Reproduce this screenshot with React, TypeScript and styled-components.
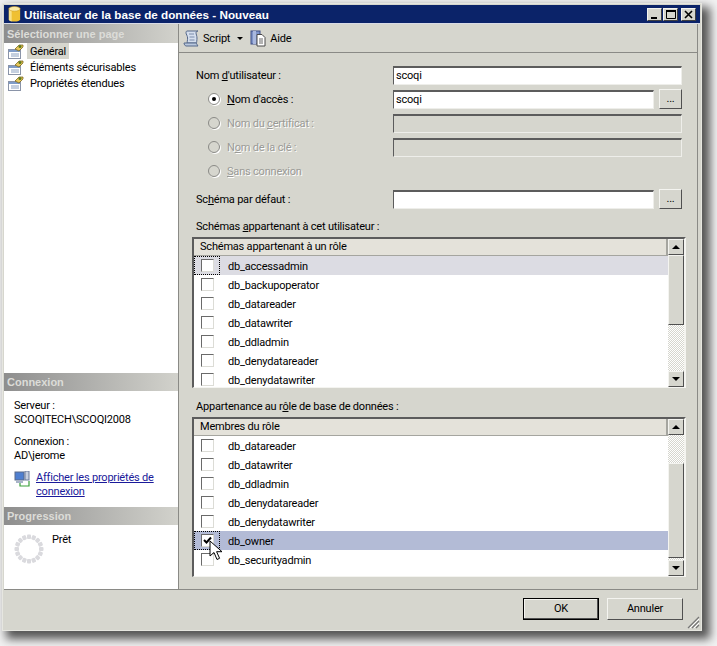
import React from "react";
import styled, { createGlobalStyle } from "styled-components";

const GRAY = "#d6d6ce";
const FONT = `"Roboto", "Liberation Sans", Arial, sans-serif`;
const BOLD = `"Liberation Sans", Arial, sans-serif`;

const Global = createGlobalStyle`
  html, body { margin: 0; padding: 0; background: #f2f2f2; }
  body { width: 717px; height: 646px; overflow: hidden; font: 11px ${FONT}; letter-spacing: -0.2px; color: #000; }
  u { text-underline-offset: 1px; }
`;

const Page = styled.div`
  width: 717px;
  height: 646px;
  padding: 3px 0 0 2px;
  box-sizing: border-box;
`;
const Win = styled.div`
  width: 700px;
  height: 628px;
  box-sizing: border-box;
  background: ${GRAY};
  border: 1px solid #e6e6e0;
  padding: 1px 1px 0 1px;
  box-shadow: 6px 6px 9px 2px #555;
  display: flex;
  flex-direction: column;
  position: relative;
`;
const TitleBar = styled.div`
  height: 19px;
  box-sizing: border-box;
  background: #0b2369;
  border-bottom: 1px solid #d8dbe6;
  display: flex;
  align-items: center;
  padding: 0 4px 0 3px;
  gap: 2px;
  flex: none;
`;
const TitleText = styled.div`
  flex: 1;
  color: #fff;
  font: bold 11.7px ${BOLD};
  letter-spacing: 0;
  white-space: nowrap;
`;
const CapButton = styled.div<{ $gap?: number }>`
  width: 15px;
  height: 13px;
  background: ${GRAY};
  border: 1px solid;
  border-color: #f4f4f0 #404040 #404040 #f4f4f0;
  box-sizing: border-box;
  margin-left: ${(p) => p.$gap ?? 0}px;
  display: flex;
  align-items: center;
  justify-content: center;
`;
const Body = styled.div`
  flex: none;
  display: flex;
  height: 566px;
  box-sizing: border-box;
  margin-right: 2px;
  border-bottom: 1px solid #8a8a86;
`;
const Side = styled.div`
  width: 175px;
  box-sizing: border-box;
  flex: none;
  background: #fff;
  border-right: 1px solid #8a8a86;
  display: flex;
  flex-direction: column;
`;
const SideHead = styled.div<{ $h: number }>`
  height: ${(p) => p.$h}px;
  flex: none;
  background: linear-gradient(90deg, #8e8e8e, #d2d2cc);
  color: #dcdcd8;
  font: bold 11px ${BOLD};
  letter-spacing: 0;
  display: flex;
  align-items: center;
  padding-left: 3px;
`;
const Nav = styled.div`
  flex: 1;
  display: flex;
  flex-direction: column;
  padding-left: 4px;
`;
const NavItem = styled.div`
  height: 16px;
  display: flex;
  align-items: center;
  gap: 3px;
  white-space: nowrap;
`;
const NavLabel = styled.span<{ $active?: boolean }>`
  padding: 0 3px;
  height: 16px;
  line-height: 18px;
  background: ${(p) => (p.$active ? GRAY : "transparent")};
`;
const ConnBox = styled.div`
  height: 116px;
  box-sizing: border-box;
  flex: none;
  padding: 8px 0 0 10px;
  line-height: 13.5px;
`;
const ConnBlock = styled.div`
  margin-bottom: 9px;
  white-space: nowrap;
`;
const LinkRow = styled.div`
  display: flex;
  gap: 5px;
  margin-top: 1px;
  align-items: flex-start;
`;
const Link = styled.a`
  color: #1a1a9a;
  text-decoration: underline;
  line-height: 13.5px;
  width: 125px;
`;
const ProgBox = styled.div`
  height: 64px;
  box-sizing: border-box;
  flex: none;
  display: flex;
  padding: 8px 0 0 9px;
  gap: 7px;
`;
const Main = styled.div`
  flex: 1;
  display: flex;
  flex-direction: column;
  min-width: 0;
  border-right: 1px solid #8a8a86;
`;
const Toolbar = styled.div`
  height: 29px;
  flex: none;
  border-bottom: 1px solid #8a8a86;
  display: flex;
  align-items: center;
  padding-left: 4px;
  box-sizing: border-box;
`;
const ToolLabel = styled.span`
  margin-left: 3px;
`;
const Caret = styled.span`
  width: 0;
  height: 0;
  border: 3px solid transparent;
  border-top: 3px solid #000;
  border-bottom: 0;
  margin: 1px 7px 0 7px;
`;
const Content = styled.div`
  flex: 1;
  padding: 10px 0 0 13px;
  display: flex;
  flex-direction: column;
`;
const FormRow = styled.div<{ $mt?: number }>`
  height: 24px;
  display: flex;
  align-items: center;
  padding-left: 4px;
  margin-top: ${(p) => p.$mt ?? 0}px;
`;
const Label = styled.div<{ $disabled?: boolean }>`
  white-space: nowrap;
  color: ${(p) => (p.$disabled ? "#9a9a96" : "#000")};
  text-shadow: ${(p) => (p.$disabled ? "1px 1px 0 #fff" : "none")};
`;
const LabelCell = styled.div`
  width: 197px;
  flex: none;
  display: flex;
  align-items: center;
`;
const Radio = styled.span<{ $on?: boolean; $disabled?: boolean }>`
  width: 12px;
  height: 12px;
  border-radius: 50%;
  box-sizing: border-box;
  flex: none;
  margin: 0 7px 0 12px;
  border: 1px solid #8a8a86;
  background: ${(p) => (p.$disabled ? GRAY : "#fff")};
  box-shadow: 1px 1px 0 #fff;
  display: flex;
  align-items: center;
  justify-content: center;
  &::after {
    content: "";
    width: 4px;
    height: 4px;
    border-radius: 50%;
    background: ${(p) => (p.$on ? "#000" : "transparent")};
  }
`;
const Field = styled.div<{ $disabled?: boolean }>`
  flex: 1;
  height: 19px;
  box-sizing: border-box;
  background: ${(p) => (p.$disabled ? GRAY : "#fff")};
  border: 2px solid;
  border-color: #5c5c5c #eeeeea #eeeeea #5c5c5c;
  border-width: 2px 1px 1px 1px;
  padding-left: 2px;
  line-height: 15px;
`;
const FieldWrap = styled.div`
  width: 289px;
  flex: none;
  display: flex;
  gap: 5px;
  align-items: center;
`;
const Browse = styled.div`
  width: 23px;
  height: 20px;
  box-sizing: border-box;
  flex: none;
  background: ${GRAY};
  border: 1px solid;
  border-color: #f4f4f0 #505050 #505050 #f4f4f0;
  text-align: center;
  line-height: 18px;
`;
const SectionLabel = styled.div<{ $mt: number }>`
  margin-top: ${(p) => p.$mt}px;
  height: 17px;
  line-height: 14px;
  padding-left: 4px;
  white-space: nowrap;
`;
const GridBox = styled.div<{ $h: number }>`
  height: ${(p) => p.$h}px;
  width: 494px;
  flex: none;
  box-sizing: border-box;
  border: 1px solid;
  border-width: 2px 2px 1px 2px;
  border-color: #5c5c5c #f4f4f0 #f4f4f0 #5c5c5c;
  display: flex;
  background: #fff;
`;
const ListCol = styled.div`
  flex: 1;
  min-width: 0;
  display: flex;
  flex-direction: column;
  overflow: hidden;
`;
const ListHead = styled.div`
  height: 17px;
  flex: none;
  box-sizing: border-box;
  background: #e4e2da;
  border-bottom: 1px solid #a5a59f;
  border-right: 2px solid #a5a59f;
  padding-left: 6px;
  line-height: 15px;
`;
const Row = styled.div<{ $tone?: "none" | "soft" | "strong" }>`
  height: 19px;
  flex: none;
  display: flex;
  align-items: center;
  position: relative;
  background: ${(p) =>
    p.$tone === "soft" ? "#dcdce3" : p.$tone === "strong" ? "#b3bbd6" : "#fff"};
`;
const CheckCell = styled.div<{ $focus?: boolean }>`
  width: 26px;
  height: 19px;
  box-sizing: border-box;
  flex: none;
  border: 1px dotted ${(p) => (p.$focus ? "#000" : "transparent")};
  display: flex;
  align-items: center;
  justify-content: center;
`;
const Check = styled.span`
  width: 13px;
  height: 13px;
  box-sizing: border-box;
  background: #fff;
  border: 1px solid;
  border-color: #6a6a6a #dcdcd6 #dcdcd6 #6a6a6a;
  display: flex;
  align-items: center;
  justify-content: center;
`;
const RowText = styled.span`
  margin-left: 8px;
  padding-top: 2px;
  white-space: nowrap;
`;
const Cursor = styled.svg`
  position: absolute;
  left: 15px;
  top: 9px;
  z-index: 2;
`;
const ScrollBar = styled.div`
  width: 16px;
  flex: none;
  display: flex;
  flex-direction: column;
  background: repeating-conic-gradient(#ffffff 0 25%, ${GRAY} 0 50%) 0 0 / 2px 2px;
`;
const ScrollBtn = styled.div`
  height: 16px;
  width: 16px;
  flex: none;
  box-sizing: border-box;
  background: ${GRAY};
  border: 1px solid;
  border-color: #f4f4f0 #505050 #505050 #f4f4f0;
  display: flex;
  align-items: center;
  justify-content: center;
`;
const Arrow = styled.span<{ $down?: boolean }>`
  width: 0;
  height: 0;
  border-left: 4px solid transparent;
  border-right: 4px solid transparent;
  ${(p) => (p.$down ? "border-top: 4px solid #000;" : "border-bottom: 4px solid #000;")}
`;
const Track = styled.div<{ $h?: number }>`
  ${(p) => (p.$h !== undefined ? `height: ${p.$h}px; flex: none;` : "flex: 1;")}
`;
const Thumb = styled.div<{ $h: number }>`
  height: ${(p) => p.$h}px;
  flex: none;
  box-sizing: border-box;
  background: ${GRAY};
  border: 1px solid;
  border-color: #f4f4f0 #505050 #505050 #f4f4f0;
`;
const Footer = styled.div`
  flex: 1;
  display: flex;
  justify-content: flex-end;
  align-items: flex-start;
  gap: 8px;
  padding: 8px 17px 0 0;
`;
const Btn = styled.div<{ $def?: boolean }>`
  width: 76px;
  height: 22px;
  box-sizing: border-box;
  background: ${GRAY};
  border: 1px solid;
  border-color: ${(p) => (p.$def ? "#000" : "#f4f4f0 #505050 #505050 #f4f4f0")};
  box-shadow: ${(p) => (p.$def ? "inset -1px -1px 0 #505050, inset 1px 1px 0 #f4f4f0" : "none")};
  text-align: center;
  line-height: 20px;
`;
const Grip = styled.svg`
  position: absolute;
  right: 1px;
  bottom: 1px;
`;

const PageIcon = () => (
  <svg width="16" height="16" viewBox="0 0 16 16">
    <rect x="0.5" y="6.5" width="12" height="9" fill="#fff" stroke="#8a94a8" />
    <rect x="1" y="7" width="11" height="2" fill="#7f9cc8" />
    <path d="M3 11h8M3 13h8" stroke="#8aa0c0" />
    <path d="M7 6 L11 2 L15 2 L15 4 L11 8 Z" fill="#e8c85a" stroke="#6f5a14" strokeWidth="0.7" />
    <circle cx="12" cy="3.5" r="1.5" fill="#5c7a20" />
  </svg>
);
const DbIcon = () => (
  <svg width="15" height="16" viewBox="0 0 14 17">
    <path d="M1 3v11c0 1.5 2.7 2.5 6 2.5s6-1 6-2.5V3Z" fill="#efc033" />
    <path d="M1 3v11c0 1.5 1.5 2.2 3 2.4V4Z" fill="#f8e088" />
    <ellipse cx="7" cy="3" rx="6" ry="2.5" fill="#fbeaa6" stroke="#c9971c" strokeWidth="0.6" />
  </svg>
);
const ScriptIcon = () => (
  <svg width="17" height="17" viewBox="0 0 17 17">
    <path d="M4 1h11c-1.4 0-2 1-2 2s1 3 1 5-.5 5-.5 5H4s.6-3 .6-5S3 4 3 3s.3-2 1-2Z" fill="#d5dfee" stroke="#55688a" />
    <path d="M1 13h12c.7 0 1 2 2 3H3c-1 0-2-2-2-3Z" fill="#b9c8de" stroke="#55688a" />
    <path d="M6 4h5M6.5 7h5M6.5 10h5" stroke="#7a8cab" />
  </svg>
);
const HelpIcon = () => (
  <svg width="17" height="17" viewBox="0 0 17 17">
    <rect x="1" y="1" width="9" height="13" fill="#7f94c8" stroke="#3f4f86" />
    <rect x="3" y="1" width="3" height="13" fill="#a9b8de" />
    <path d="M7 4.5h5l3 3v8.5H7Z" fill="#fff" stroke="#4a4a4a" />
    <path d="M9 9h4M9 11h4M9 13h4" stroke="#666" />
  </svg>
);
const ConnIcon = () => (
  <svg width="17" height="16" viewBox="0 0 17 16" style={{ flex: "none" }}>
    <rect x="1" y="1" width="9" height="8" fill="#4f7fd0" stroke="#5a6a8a" />
    <rect x="2" y="10" width="7" height="2" fill="#a8b4c8" />
    <rect x="11" y="0" width="4" height="9" fill="#c8d0e0" stroke="#6a7a9a" />
    <path d="M6 12v3h9v-5" fill="none" stroke="#3aa03a" strokeWidth="1.2" />
  </svg>
);
const Spinner = () => {
  const dots = Array.from({ length: 16 }, (_, i) => (i * 360) / 16);
  return (
    <svg width="32" height="32" viewBox="0 0 32 32" style={{ flex: "none" }}>
      {dots.map((a) => (
        <rect key={a} x="14" y="1.5" width="4" height="4.5" rx="1" fill="#dadade" transform={`rotate(${a} 16 16)`} />
      ))}
    </svg>
  );
};

type Item = { name: string; checked?: boolean; tone?: "none" | "soft" | "strong"; focus?: boolean; cursor?: boolean };

const Tick = () => (
  <svg width="9" height="9" viewBox="0 0 9 9">
    <path d="M1 4l2.5 2.5L8 1.5" fill="none" stroke="#000" strokeWidth="2" />
  </svg>
);

const Grid = ({ head, items, h, top, thumb }: { head: string; items: Item[]; h: number; top: number; thumb: number }) => (
  <GridBox $h={h}>
    <ListCol>
      <ListHead>{head}</ListHead>
      {items.map((it) => (
        <Row key={it.name} $tone={it.tone}>
          <CheckCell $focus={it.focus}>
            <Check>{it.checked && <Tick />}</Check>
          </CheckCell>
          <RowText>{it.name}</RowText>
          {it.cursor && (
            <Cursor width="14" height="21" viewBox="0 0 14 21">
              <path d="M1 1v15l4-3.5 3 7 2.6-1.2-3-6.6H13Z" fill="#fff" stroke="#000" />
            </Cursor>
          )}
        </Row>
      ))}
    </ListCol>
    <ScrollBar>
      <ScrollBtn><Arrow /></ScrollBtn>
      <Track $h={top} />
      <Thumb $h={thumb} />
      <Track />
      <ScrollBtn><Arrow $down /></ScrollBtn>
    </ScrollBar>
  </GridBox>
);

export default function App() {
  return (
    <Page>
      <Global />
      <Win>
        <TitleBar>
          <DbIcon />
          <TitleText>Utilisateur de la base de données - Nouveau</TitleText>
          <CapButton>
            <svg width="9" height="9"><rect x="1" y="7" width="6" height="2" fill="#000" /></svg>
          </CapButton>
          <CapButton $gap={-1}>
            <svg width="10" height="9"><path d="M0.5 1.5h9v7h-9Z" fill="none" stroke="#000" /><rect width="10" height="2" fill="#000" /></svg>
          </CapButton>
          <CapButton $gap={1}>
            <svg width="9" height="9"><path d="M1 1l7 7M8 1l-7 7" stroke="#000" strokeWidth="1.6" /></svg>
          </CapButton>
        </TitleBar>
        <Body>
          <Side>
            <SideHead $h={19}>Sélectionner une page</SideHead>
            <Nav>
              <NavItem><PageIcon /><NavLabel $active>Général</NavLabel></NavItem>
              <NavItem><PageIcon /><NavLabel>Éléments sécurisables</NavLabel></NavItem>
              <NavItem><PageIcon /><NavLabel>Propriétés étendues</NavLabel></NavItem>
            </Nav>
            <SideHead $h={18}>Connexion</SideHead>
            <ConnBox>
              <ConnBlock>Serveur :<br />SCOQITECH\SCOQI2008</ConnBlock>
              <ConnBlock>Connexion :<br />AD\jerome</ConnBlock>
              <LinkRow>
                <ConnIcon />
                <Link>Afficher les propriétés de connexion</Link>
              </LinkRow>
            </ConnBox>
            <SideHead $h={18}>Progression</SideHead>
            <ProgBox>
              <Spinner />
              <span>Prêt</span>
            </ProgBox>
          </Side>
          <Main>
            <Toolbar>
              <ScriptIcon />
              <ToolLabel>Script</ToolLabel>
              <Caret />
              <HelpIcon />
              <ToolLabel>Aide</ToolLabel>
            </Toolbar>
            <Content>
              <FormRow>
                <LabelCell><Label>Nom <u>d</u>'utilisateur :</Label></LabelCell>
                <FieldWrap><Field>scoqi</Field></FieldWrap>
              </FormRow>
              <FormRow>
                <LabelCell><Radio $on /><Label><u>N</u>om d'accès :</Label></LabelCell>
                <FieldWrap><Field>scoqi</Field><Browse>...</Browse></FieldWrap>
              </FormRow>
              <FormRow>
                <LabelCell><Radio $disabled /><Label $disabled>Nom du <u>c</u>ertificat :</Label></LabelCell>
                <FieldWrap><Field $disabled /></FieldWrap>
              </FormRow>
              <FormRow>
                <LabelCell><Radio $disabled /><Label $disabled>N<u>o</u>m de la clé :</Label></LabelCell>
                <FieldWrap><Field $disabled /></FieldWrap>
              </FormRow>
              <FormRow>
                <LabelCell><Radio $disabled /><Label $disabled><u>S</u>ans connexion</Label></LabelCell>
              </FormRow>
              <FormRow $mt={4}>
                <LabelCell><Label>Sc<u>h</u>éma par défaut :</Label></LabelCell>
                <FieldWrap><Field /><Browse>...</Browse></FieldWrap>
              </FormRow>
              <SectionLabel $mt={9}>Schémas <u>a</u>ppartenant à cet utilisateur :</SectionLabel>
              <Grid
                head="Schémas appartenant à un rôle"
                h={151}
                top={0}
                thumb={70}
                items={[
                  { name: "db_accessadmin", tone: "soft", focus: true },
                  { name: "db_backupoperator" },
                  { name: "db_datareader" },
                  { name: "db_datawriter" },
                  { name: "db_ddladmin" },
                  { name: "db_denydatareader" },
                  { name: "db_denydatawriter" },
                ]}
              />
              <SectionLabel $mt={12}>Appartenance au r<u>ô</u>le de base de données :</SectionLabel>
              <Grid
                head="Membres du rôle"
                h={160}
                top={28}
                thumb={95}
                items={[
                  { name: "db_datareader" },
                  { name: "db_datawriter" },
                  { name: "db_ddladmin" },
                  { name: "db_denydatareader" },
                  { name: "db_denydatawriter" },
                  { name: "db_owner", checked: true, tone: "strong", focus: true, cursor: true },
                  { name: "db_securityadmin" },
                ]}
              />
            </Content>
          </Main>
        </Body>
        <Footer>
          <Btn $def>OK</Btn>
          <Btn>Annuler</Btn>
        </Footer>
        <Grip width="13" height="13" viewBox="0 0 13 13">
          <path d="M12 1L1 12M12 5L5 12M12 9L9 12" stroke="#777" strokeWidth="1.2" />
          <path d="M12 3L3 12M12 7L7 12" stroke="#fff" />
        </Grip>
      </Win>
    </Page>
  );
}
